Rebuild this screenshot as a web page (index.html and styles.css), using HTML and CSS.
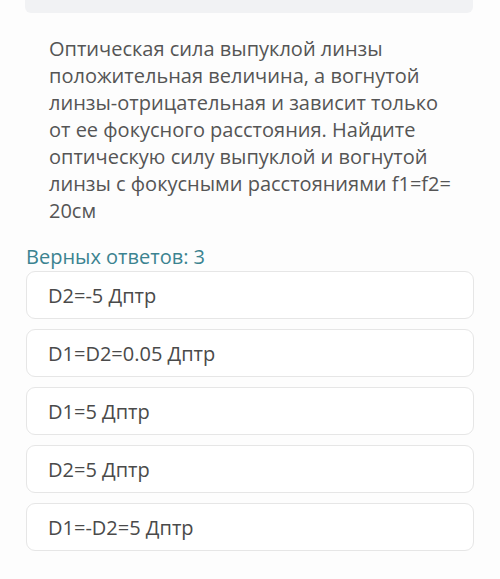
FILE: index.html
```html
<!DOCTYPE html>
<html lang="ru">
<head>
<meta charset="utf-8">
<link rel="stylesheet" href="styles.css">
</head>
<body>
<div class="page">
  <div class="topbar"></div>
  <p class="question">Оптическая сила выпуклой линзы положительная величина, а вогнутой линзы-отрицательная и зависит только от ее фокусного расстояния. Найдите оптическую силу выпуклой и вогнутой линзы с фокусными расстояниями f1=f2= 20см</p>
  <div class="label">Верных ответов: 3</div>
  <ul class="answers">
    <li class="answer">D2=-5 Дптр</li>
    <li class="answer">D1=D2=0.05 Дптр</li>
    <li class="answer">D1=5 Дптр</li>
    <li class="answer">D2=5 Дптр</li>
    <li class="answer">D1=-D2=5 Дптр</li>
  </ul>
</div>
</body>
</html>
```

FILE: styles.css
```css
html, body {
  margin: 0;
  padding: 0;
  background: #fdfdfd;
}
body {
  font-family: "Open Sans", "Liberation Sans", sans-serif;
  width: 500px;
  height: 579px;
  overflow: hidden;
}
.page {
  padding: 0 26px 0 26px;
}
.topbar {
  height: 13px;
  background: #f1f2f4;
  border-radius: 0 0 6px 6px;
  margin: 0 1px 0 -1px;
}
.question {
  margin: 22px 0 0 23px;
  font-size: 20px;
  line-height: 27px;
  color: #555555;
  width: 405px;
}
.label {
  margin-top: 20px;
  font-size: 20px;
  line-height: 26px;
  color: #3b8390;
}
.answers {
  list-style: none;
  margin: 1px 0 0 0;
  padding: 0;
  display: flex;
  flex-direction: column;
  gap: 10px;
}
.answer {
  height: 46px;
  box-sizing: content-box;
  border: 1px solid #e6e6e6;
  border-radius: 9px;
  background: #ffffff;
  display: flex;
  align-items: center;
  padding-left: 21px;
  font-size: 20px;
  color: #4a4a4a;
}
```
